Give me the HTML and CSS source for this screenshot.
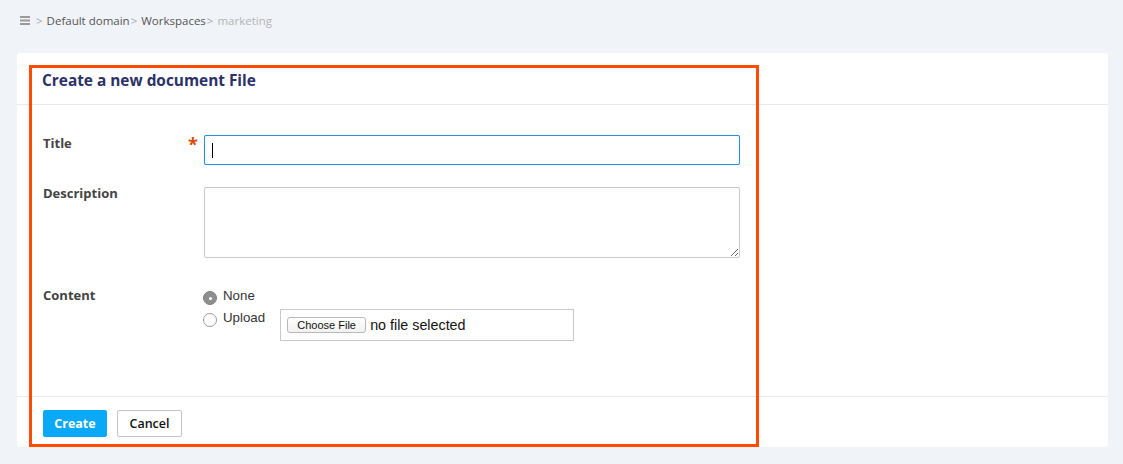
FILE: index.html
```html
<!DOCTYPE html>
<html>
<head>
<meta charset="utf-8">
<link rel="stylesheet" href="styles.css">
</head>
<body>
<div class="breadcrumb">
  <svg class="menu-icon" width="10" height="9" viewBox="0 0 10 9"><rect x="0" y="0" width="10" height="2" fill="#9a9a9a"/><rect x="0" y="3.5" width="10" height="2" fill="#9a9a9a"/><rect x="0" y="7" width="10" height="2" fill="#9a9a9a"/></svg>
  <span class="sep">&gt;</span>
  <span class="crumb">Default domain</span><span class="sep">&gt;</span>
  <span class="crumb">Workspaces</span><span class="sep">&gt;</span>
  <span class="crumb current">marketing</span>
</div>
<div class="card">
  <div class="card-header">
    <h1 class="card-title">Create a new document File</h1>
  </div>
  <div class="card-body">
    <div class="form-row row-title">
      <label class="form-label">Title<span class="required">*</span></label>
      <div class="form-field"><input class="text-input focused" type="text"><span class="caret"></span></div>
    </div>
    <div class="form-row row-desc">
      <label class="form-label">Description</label>
      <div class="form-field"><textarea class="text-area"></textarea></div>
    </div>
    <div class="form-row row-content">
      <label class="form-label">Content</label>
      <div class="form-field radios">
        <div class="radio-line"><span class="radio checked"></span><span class="radio-text">None</span></div>
        <div class="radio-line"><span class="radio"></span><span class="radio-text">Upload</span>
          <div class="file-box"><span class="choose-btn">Choose File</span><span class="file-text">no file selected</span></div>
        </div>
      </div>
    </div>
  </div>
  <div class="card-footer">
    <button class="btn btn-primary">Create</button>
    <button class="btn btn-default">Cancel</button>
  </div>
</div>
<div class="highlight"></div>
</body>
</html>
```
FILE: styles.css
```css
html, body { margin: 0; padding: 0; }
body {
  background: #f0f3f8;
  font-family: "Open Sans", "DejaVu Sans", sans-serif;
  width: 1123px;
  height: 464px;
  position: relative;
  overflow: hidden;
}
.breadcrumb {
  height: 40px;
  display: flex;
  align-items: center;
  padding-left: 20px;
  font-size: 11.5px;
  color: #555;
}
.menu-icon { margin-right: 6px; }
.sep { color: #aaa; margin: 0 4px 0 0; }
.crumb { color: #555; margin-right: 1px; }
.crumb.current { color: #b5b5b5; }
.card {
  margin: 13px 15px 0 17px;
  height: 394px;
  background: #fff;
  border-radius: 3px;
  display: flex;
  flex-direction: column;
}
.card-header {
  height: 52px;
  flex: none;
  border-bottom: 1px solid #e8eaee;
  display: flex;
  align-items: center;
  padding-left: 25px;
  padding-top: 3px;
  box-sizing: border-box;
}
.card-title {
  margin: 0;
  font-size: 15.4px;
  font-weight: 700;
  color: #2b3266;
}
.card-body {
  flex: 1;
  padding: 30px 0 0 26px;
}
.form-row { display: flex; }
.form-label {
  width: 161px;
  flex: none;
  font-size: 13px;
  font-weight: 700;
  color: #444;
  position: relative;
  margin-top: -1px;
}
.row-desc .form-label, .row-content .form-label { margin-top: -3px; }
.required {
  position: absolute;
  left: 145px;
  top: -2px;
  color: #d54a00;
  font-size: 18px;
  font-weight: 700;
}
.form-field { position: relative; }
.row-desc { margin-top: 22px; }
.row-content { margin-top: 31px; }
.text-input {
  box-sizing: border-box;
  width: 536px;
  height: 30px;
  border: 1px solid #2c8fe6;
  border-radius: 2px;
  outline: none;
  box-shadow: 0 0 1px #7dbcf5;
  margin: 0;
  display: block;
}
.caret {
  position: absolute;
  left: 8px;
  top: 8px;
  width: 1px;
  height: 15px;
  background: #000;
}
.text-area {
  box-sizing: border-box;
  width: 536px;
  height: 71px;
  border: 1px solid #c9c9c9;
  border-radius: 2px;
  margin: 0;
  display: block;
  resize: both;
}
.radios { font-family: "Liberation Sans", Arial, sans-serif; font-size: 13px; color: #333; padding-top: 2px; }
.radio-line { display: flex; align-items: flex-start; height: 20px; }
.radio-line + .radio-line { margin-top: 2px; }
.radio {
  box-sizing: border-box;
  width: 14px;
  height: 14px;
  border-radius: 50%;
  border: 1px solid #9b9b9b;
  background: #fff;
  margin: 0 6px 0 -1px;
  flex: none;
  position: relative;
}
.radio.checked {
  background: #8e8e8e;
  border-color: #7f7f7f;
}
.radio.checked::after {
  content: "";
  position: absolute;
  left: 4.5px;
  top: 4.5px;
  width: 3px;
  height: 3px;
  border-radius: 50%;
  background: #fff;
}
.radio-text { line-height: 14px; margin-top: -2px; font-size: 13.3px; }
.file-box {
  box-sizing: border-box;
  width: 294px;
  height: 32px;
  border: 1px solid #c9c9c9;
  margin-left: 15px;
  margin-top: -4px;
  display: flex;
  align-items: center;
  padding-left: 6px;
}
.choose-btn {
  box-sizing: border-box;
  height: 16px;
  width: 79px;
  border: 1px solid #b8b8b8;
  border-radius: 3px;
  background: linear-gradient(#fff, #f1f1f1);
  font-size: 11px;
  color: #111;
  display: flex;
  align-items: center;
  justify-content: center;
  margin-right: 4px;
}
.file-text { font-size: 14.3px; color: #111; }
.card-footer {
  height: 51px;
  flex: none;
  border-top: 1px solid #e8eaee;
  padding: 13px 0 0 26px;
  box-sizing: border-box;
  display: flex;
  align-items: flex-start;
  gap: 10px;
}
.btn {
  height: 27px;
  font-family: "Open Sans", "DejaVu Sans", sans-serif;
  font-size: 12.5px;
  font-weight: 700;
  border-radius: 2px;
  padding: 0;
  margin: 0;
}
.btn-primary {
  width: 64px;
  background: #0aa9f7;
  border: 1px solid #0aa9f7;
  color: #fff;
}
.btn-default {
  width: 65px;
  background: #fff;
  border: 1px solid #c4c4c4;
  color: #111;
  font-weight: 600;
}
.highlight {
  position: absolute;
  left: 29px;
  top: 65px;
  width: 724px;
  height: 376px;
  border: 3px solid #ff4a00;
  pointer-events: none;
}
```
